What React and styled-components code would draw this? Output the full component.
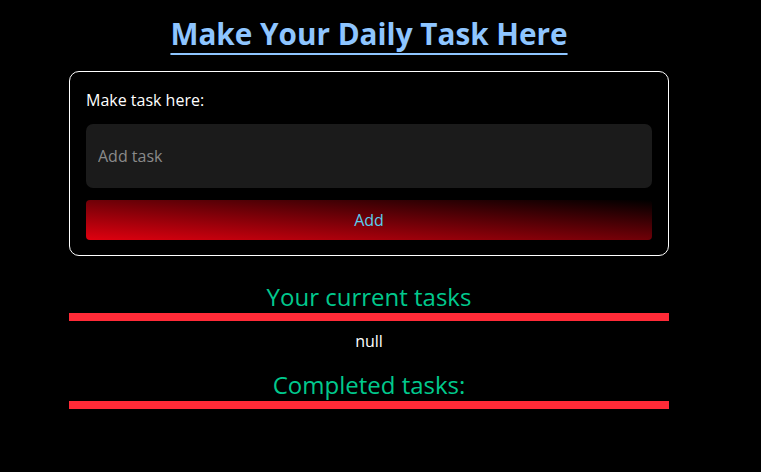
import React from "react";
import styled, { createGlobalStyle } from "styled-components";

const Global = createGlobalStyle`
  html, body { margin: 0; padding: 0; background: #000; }
  body { font-family: "Open Sans", "Noto Sans", sans-serif; color: #fff; }
`;

const Page = styled.div`
  width: 738px;
  min-height: 472px;
  display: flex;
  flex-direction: column;
  align-items: center;
  padding-top: 13px;
  box-sizing: border-box;
`;

const Title = styled.h1`
  margin: 0;
  font-size: 29.7px;
  font-weight: 700;
  line-height: 41px;
  color: #8ec5ff;
  text-decoration: underline;
  text-decoration-thickness: 2px;
  text-underline-offset: 8px;
`;

const Card = styled.div`
  width: 600px;
  box-sizing: border-box;
  margin-top: 17px;
  border: 1px solid #fff;
  border-radius: 10px;
  padding: 16px 16px 15px;
  display: flex;
  flex-direction: column;
`;

const Label = styled.label`
  font-size: 16px;
  line-height: 24px;
  margin-bottom: 12px;
`;

const Input = styled.input`
  height: 64px;
  box-sizing: border-box;
  border: none;
  outline: none;
  background: #1b1b1b;
  border-radius: 7px;
  padding: 0 12px;
  font-family: inherit;
  font-size: 16px;
  color: #fff;
  &::placeholder { color: #8a8a8a; }
`;

const AddButton = styled.button`
  margin-top: 12px;
  height: 40px;
  border: none;
  border-radius: 4px;
  background: linear-gradient(to top right, #e0000f, #000);
  color: #58cff0;
  font-family: inherit;
  font-size: 16px;
`;

const Section = styled.section`
  width: 600px;
  display: flex;
  flex-direction: column;
  align-items: center;
  margin-top: ${(p) => p.$top}px;
`;

const SectionTitle = styled.h2`
  margin: 0;
  font-size: 24px;
  font-weight: 400;
  line-height: 32px;
  color: #00c98d;
`;

const Bar = styled.div`
  width: 100%;
  height: 8px;
  background: #ff2a37;
`;

const Empty = styled.p`
  margin: 9px 0 0;
  font-size: 16px;
  line-height: 22px;
`;

export default function App() {
  return (
    <>
      <Global />
      <Page>
        <Title>Make Your Daily Task Here</Title>
        <Card>
          <Label>Make task here:</Label>
          <Input placeholder="Add task" />
          <AddButton>Add</AddButton>
        </Card>
        <Section $top={25}>
          <SectionTitle>Your current tasks</SectionTitle>
          <Bar />
          <Empty>null</Empty>
        </Section>
        <Section $top={17}>
          <SectionTitle>Completed tasks:</SectionTitle>
          <Bar />
        </Section>
      </Page>
    </>
  );
}
